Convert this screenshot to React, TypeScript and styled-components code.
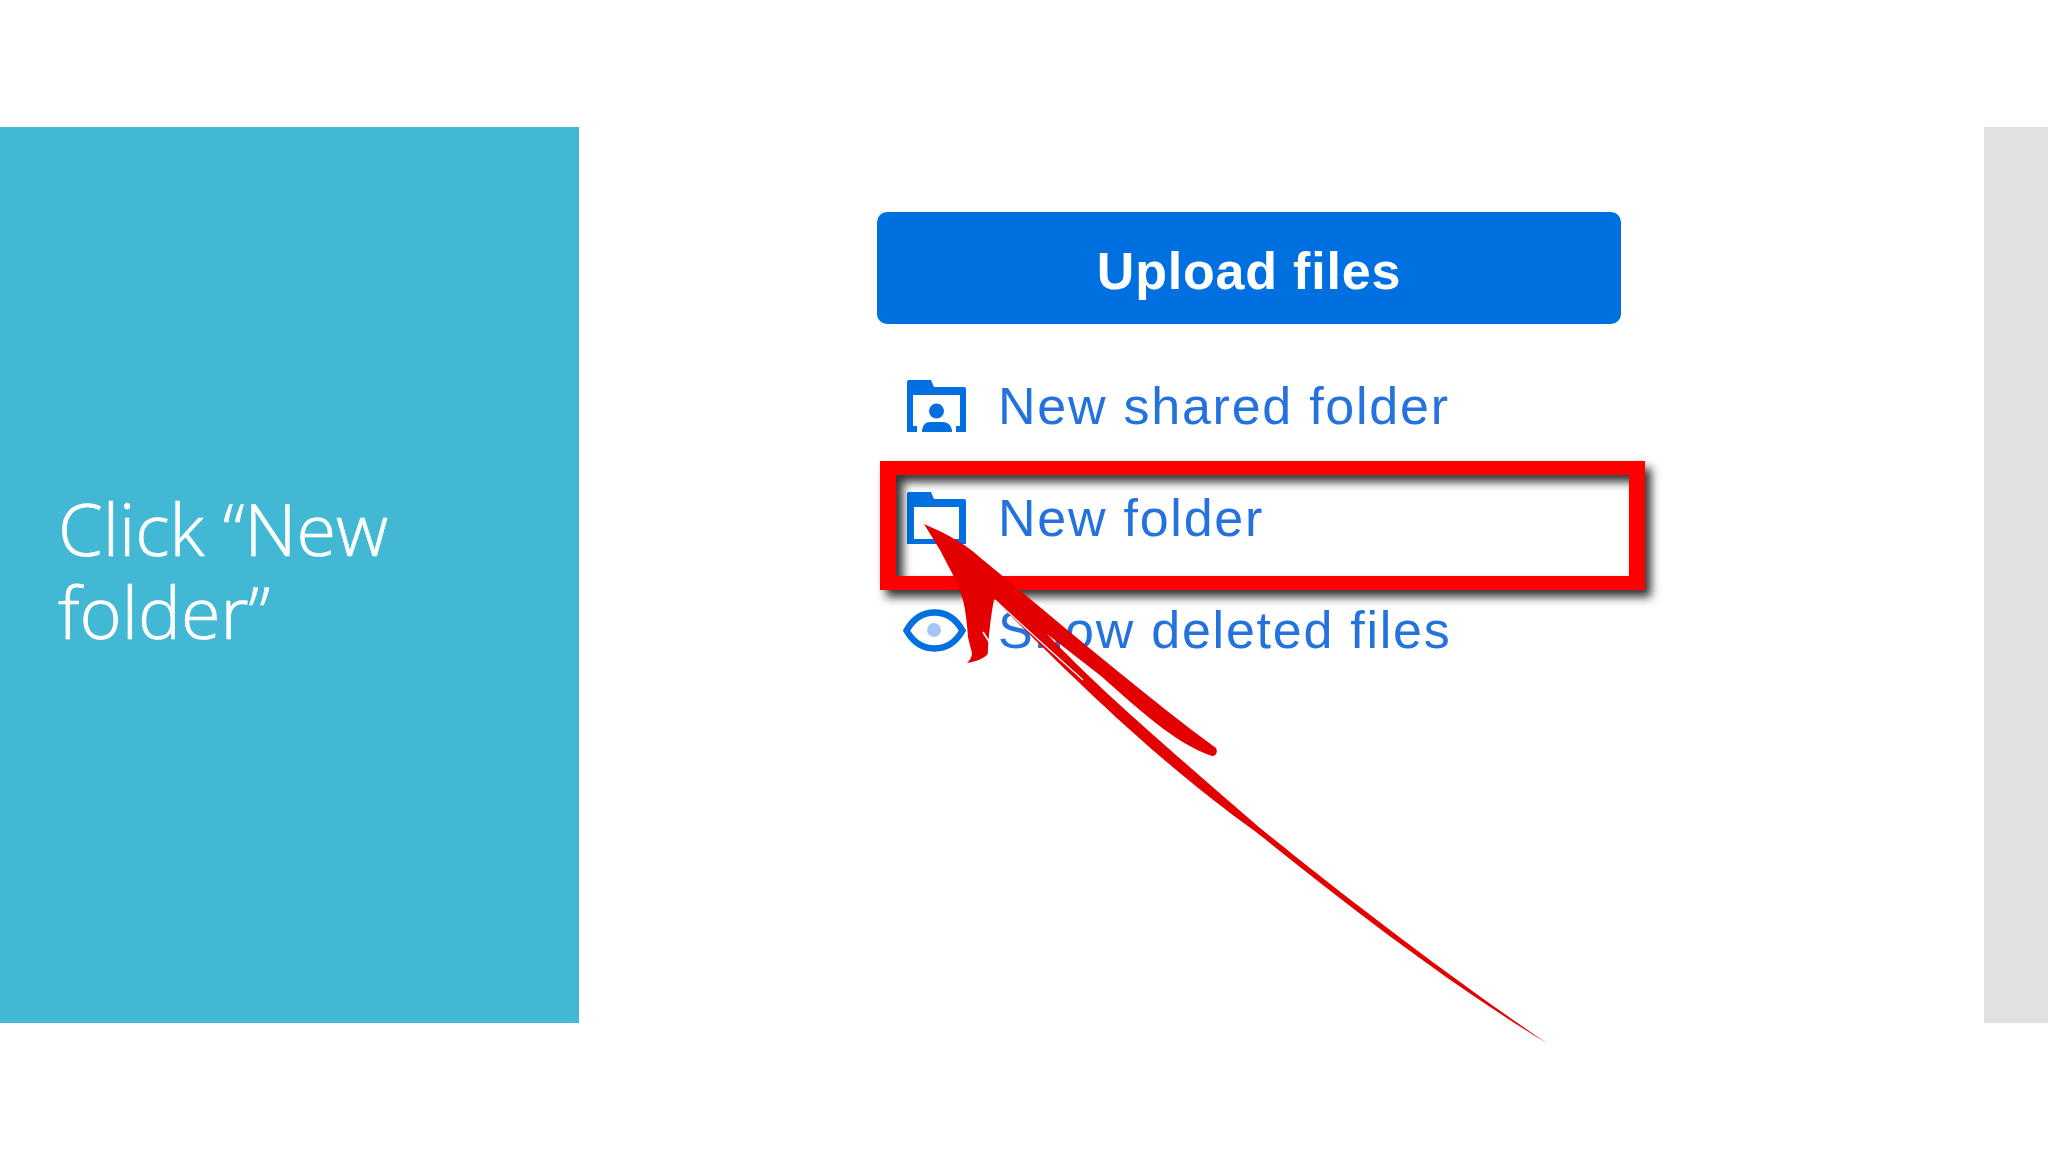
import React, { FC } from 'react';
import styled, { createGlobalStyle } from 'styled-components';

const GlobalStyle = createGlobalStyle`
	html, body {
		margin: 0;
		padding: 0;
		background: #fff;
		overflow: hidden;
	}
`;

const Page = styled.div`
	position: relative;
	width: 2048px;
	height: 1152px;
	background: #fff;
	padding-top: 127px;
	box-sizing: border-box;
`;

const Slide = styled.div`
	display: flex;
	height: 896px;
`;

const TitlePanel = styled.aside`
	width: 579px;
	flex-shrink: 0;
	box-sizing: border-box;
	padding: 0 60px 10px 58px;
	display: flex;
	align-items: center;
	background: #43b8d5;
`;

const Title = styled.h1`
	margin: 0;
	font-family: 'Open Sans', 'Liberation Sans', sans-serif;
	font-weight: 300;
	font-size: 72px;
	line-height: 83px;
	color: #fff;
	-webkit-text-stroke: 0.7px #fff;
`;

const Content = styled.main`
	flex: 1;
	box-sizing: border-box;
	padding: 85px 0 0 298px;
`;

const Menu = styled.div`
	width: 744px;
`;

const UploadButton = styled.button`
	display: block;
	width: 100%;
	height: 112px;
	border: 0;
	border-radius: 10px;
	background: #0070e0;
	color: #fff;
	font-family: 'Liberation Sans', Arial, sans-serif;
	font-weight: 700;
	font-size: 52px;
	letter-spacing: 0.8px;
	padding: 5px 0 0;
	margin-bottom: 26px;
	span {
		filter: blur(0.5px);
	}
`;

const Row = styled.div`
	position: relative;
	display: flex;
	align-items: center;
	gap: 32px;
	height: 112px;
	padding-left: 26px;
`;

const IconSlot = styled.div`
	display: flex;
	justify-content: flex-end;
	width: 63px;
	filter: blur(0.5px);
	svg {
		display: block;
	}
`;

const Label = styled.span`
	font-family: 'Liberation Sans', Arial, sans-serif;
	font-size: 52px;
	letter-spacing: 1.75px;
	color: #2472de;
	filter: blur(0.5px);
`;

const Highlight = styled.div`
	position: absolute;
	left: 3px;
	top: -1px;
	width: 765px;
	height: 129px;
	box-sizing: border-box;
	border-style: solid;
	border-color: #ff0000;
	border-width: 14px 16px;
	box-shadow: 6px 7px 9px rgba(0, 0, 0, 0.8), inset 7px 7px 10px rgba(0, 0, 0, 0.8);
`;

const SideStrip = styled.div`
	width: 64px;
	flex-shrink: 0;
	background: #e1e1e2;
`;

const ArrowLayer = styled.svg`
	position: absolute;
	left: 0;
	top: 0;
	pointer-events: none;
`;

const SharedFolderIcon: FC = () => (
	<svg width='59' height='52' viewBox='0 0 59 52' fill='#0070e0'>
		<path d='M0 2a2 2 0 0 1 2-2h22l3 7h30a2 2 0 0 1 2 2v43H49v-6h4V15H6v31h4v6H0z' />
		<circle cx='29.5' cy='31' r='7.5' />
		<path d='M15 52c0-6 3-10 8-10h13c5 0 9 4 9 10z' />
	</svg>
);

const FolderIcon: FC = () => (
	<svg width='59' height='52' viewBox='0 0 59 52' fill='#0070e0'>
		<path
			fillRule='evenodd'
			d='M0 2a2 2 0 0 1 2-2h22l3 7h30a2 2 0 0 1 2 2v43H0zM7 15v32h45V15z'
		/>
	</svg>
);

const EyeIcon: FC = () => (
	<svg width='63' height='43' viewBox='0 0 63 43'>
		<path
			d='M3.5 21.5C10 10 20 3.5 31.5 3.5S53 10 59.5 21.5C53 33 43 39.5 31.5 39.5S10 33 3.5 21.5z'
			fill='none'
			stroke='#0070e0'
			strokeWidth='6.5'
		/>
		<circle cx='31' cy='21' r='7' fill='#a4c8f5' />
	</svg>
);

const Arrow: FC = () => (
	<ArrowLayer width='2048' height='1152' viewBox='0 0 2048 1152'>
		<path
			fill='#e20000'
			d='M924 524C950 535 968 546 983 560C1060 623 1140 692 1216 748C1218 752 1216 756 1212 756C1180 745 1150 720 1101 676L1047 634C1100 690 1170 750 1260 828C1340 893 1450 978 1547 1043C1450 985 1350 907 1256 832C1170 770 1100 705 994 599C991 615 989 632 988 647C988 652 988 654 987 655C981 660 974 662 967 663C970 660 972 657 972 653C971 648 969 643 968 637C967 625 966 612 963 600C960 590 956 581 952 573L940 550z'
		/>
		<path d='M995 600C1025 628 1055 655 1083 680' fill='none' stroke='#fff' strokeWidth='1.2' />
		<path d='M983 632L993 648' fill='none' stroke='#fff' strokeWidth='1.6' />
	</ArrowLayer>
);

const App: FC = () => (
	<Page>
		<GlobalStyle />
		<Slide>
			<TitlePanel>
				<Title>Click “New folder”</Title>
			</TitlePanel>
			<Content>
				<Menu>
					<UploadButton>
						<span>Upload files</span>
					</UploadButton>
					<Row>
						<IconSlot>
							<SharedFolderIcon />
						</IconSlot>
						<Label>New shared folder</Label>
					</Row>
					<Row>
						<IconSlot>
							<FolderIcon />
						</IconSlot>
						<Label>New folder</Label>
						<Highlight />
					</Row>
					<Row>
						<IconSlot>
							<EyeIcon />
						</IconSlot>
						<Label>Show deleted files</Label>
					</Row>
				</Menu>
			</Content>
			<SideStrip />
		</Slide>
		<Arrow />
	</Page>
);

export default App;
